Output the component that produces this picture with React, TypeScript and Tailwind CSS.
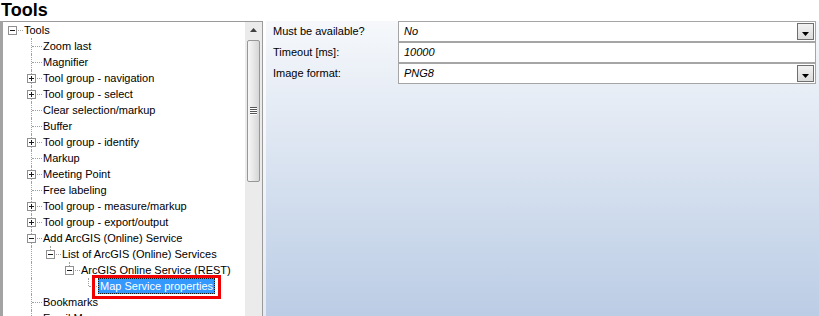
import React from 'react';

type Cell = 'none' | 'full' | 'tee' | 'ell' | 'root';

type TreeRow = {
  label: string;
  cells: Cell[];
  exp?: '+' | '-';
  selected?: boolean;
};

const top = (label: string, exp?: '+' | '-'): TreeRow => ({ label, cells: ['none', 'tee'], exp });

const rows: TreeRow[] = [
  { label: 'Tools', cells: ['root'], exp: '-' },
  top('Zoom last'),
  top('Magnifier'),
  top('Tool group - navigation', '+'),
  top('Tool group - select', '+'),
  top('Clear selection/markup'),
  top('Buffer'),
  top('Tool group - identify', '+'),
  top('Markup'),
  top('Meeting Point', '+'),
  top('Free labeling'),
  top('Tool group - measure/markup', '+'),
  top('Tool group - export/output', '+'),
  top('Add ArcGIS (Online) Service', '-'),
  { label: 'List of ArcGIS (Online) Services', cells: ['none', 'full', 'ell'], exp: '-' },
  { label: 'ArcGIS Online Service (REST)', cells: ['none', 'full', 'none', 'ell'], exp: '-' },
  { label: 'Map Service properties', cells: ['none', 'full', 'none', 'none', 'ell'], selected: true },
  top('Bookmarks'),
  top('Email Map'),
];

const props = [
  { label: 'Must be available?', value: 'No', dropdown: true },
  { label: 'Timeout [ms]:', value: '10000', dropdown: false },
  { label: 'Image format:', value: 'PNG8', dropdown: true },
];

const Expander = ({ sign }: { sign: '+' | '-' }) => (
  <svg width="9" height="9" className="absolute left-[4px] top-[4px]">
    <rect x="0.5" y="0.5" width="8" height="8" fill="#fff" stroke="#8e8f8f" />
    <path d="M2 4.5h5" stroke="#1b1b1b" />
    {sign === '+' && <path d="M4.5 2v5" stroke="#1b1b1b" />}
  </svg>
);

const TreeCell = ({ kind, exp }: { kind: Cell; exp?: '+' | '-' }) => (
  <div className="relative h-4 w-[19px] shrink-0">
    {(kind === 'full' || kind === 'tee') && (
      <div className="absolute left-[8px] top-0 h-4 border-l border-dotted border-[#a0a0a0]" />
    )}
    {kind === 'ell' && (
      <div className="absolute left-[8px] top-0 h-[8px] border-l border-dotted border-[#a0a0a0]" />
    )}
    {(kind === 'tee' || kind === 'ell' || kind === 'root') && (
      <div className="absolute left-[9px] top-[8px] w-[10px] border-t border-dotted border-[#a0a0a0]" />
    )}
    {exp && <Expander sign={exp} />}
  </div>
);

const DropButton = () => (
  <div className="mr-[1px] flex h-[17px] w-[17px] shrink-0 items-end justify-center border border-[#6f6f6f] bg-gradient-to-b from-[#f2f2f2] to-[#dcdcdc] pb-[3px]">
    <svg width="7" height="4">
      <path d="M0 0h7L3.5 4z" fill="#000" />
    </svg>
  </div>
);

export default function App() {
  return (
    <div className="flex h-[316px] w-[819px] flex-col overflow-hidden bg-white text-[11px] text-black [font-family:'Liberation_Sans',Arial,sans-serif]">
      <div className="h-[21px] shrink-0 pl-[1px] text-[18px] font-bold leading-[21px]">Tools</div>

      <div className="flex flex-1 border-l-[3px] border-[#a3a3a3]">
        {/* tree */}
        <div className="relative flex w-[260px] shrink-0 border-r border-t border-[#9a9a9a]">
          <div className="flex-1 overflow-hidden pl-[1px]">
            {rows.map((r) => (
              <div key={r.label} className="flex h-4 items-center">
                {r.cells.map((c, i) => (
                  <TreeCell key={i} kind={c} exp={i === r.cells.length - 1 ? r.exp : undefined} />
                ))}
                {r.selected ? (
                  <span className="-ml-[1px] h-4 whitespace-nowrap border border-dotted border-[#1a1a1a] bg-[#3399ff] px-[1px] leading-[14px] text-white">
                    {r.label}
                  </span>
                ) : (
                  <span className="whitespace-nowrap pl-[1px] leading-4">{r.label}</span>
                )}
              </div>
            ))}
          </div>

          {/* scrollbar */}
          <div className="flex w-[17px] shrink-0 flex-col bg-[#ebebeb]">
            <div className="flex h-[17px] items-center justify-center pb-[1px]">
              <svg width="7" height="4">
                <path d="M3.5 0L7 4H0z" fill="#404040" />
              </svg>
            </div>
            <div className="ml-[2px] mr-[2px] mt-[1px] flex h-[142px] items-center justify-center rounded-[2px] border border-[#979797] bg-gradient-to-r from-[#f7f7f7] to-[#d6d6d6]">
              <svg width="7" height="8">
                <path d="M0 0.5h7M0 2.5h7M0 4.5h7M0 6.5h7" stroke="#555" />
                <path d="M0 1.5h7M0 3.5h7M0 5.5h7M0 7.5h7" stroke="#fff" />
              </svg>
            </div>
          </div>

          {/* annotation */}
          <div className="absolute left-[89px] top-[253px] h-[24px] w-[129px] border-[3px] border-[#f00000]" />
        </div>

        <div className="w-[3px] shrink-0 bg-gradient-to-b from-white to-[#e4eaf2]" />

        {/* property panel */}
        <div className="flex-1 bg-gradient-to-b from-[#f6f8fb] to-[#b9cbe4] pl-[7px] pr-[3px]">
          {props.map((p) => (
            <div key={p.label} className="flex h-[21px] items-center">
              <div className="w-[125px] shrink-0">{p.label}</div>
              <div className="flex h-[21px] flex-1 items-center border border-[#a5a5a5] bg-white pl-[5px] italic">
                <span className="flex-1">{p.value}</span>
                {p.dropdown && <DropButton />}
              </div>
            </div>
          ))}
        </div>
      </div>
    </div>
  );
}
